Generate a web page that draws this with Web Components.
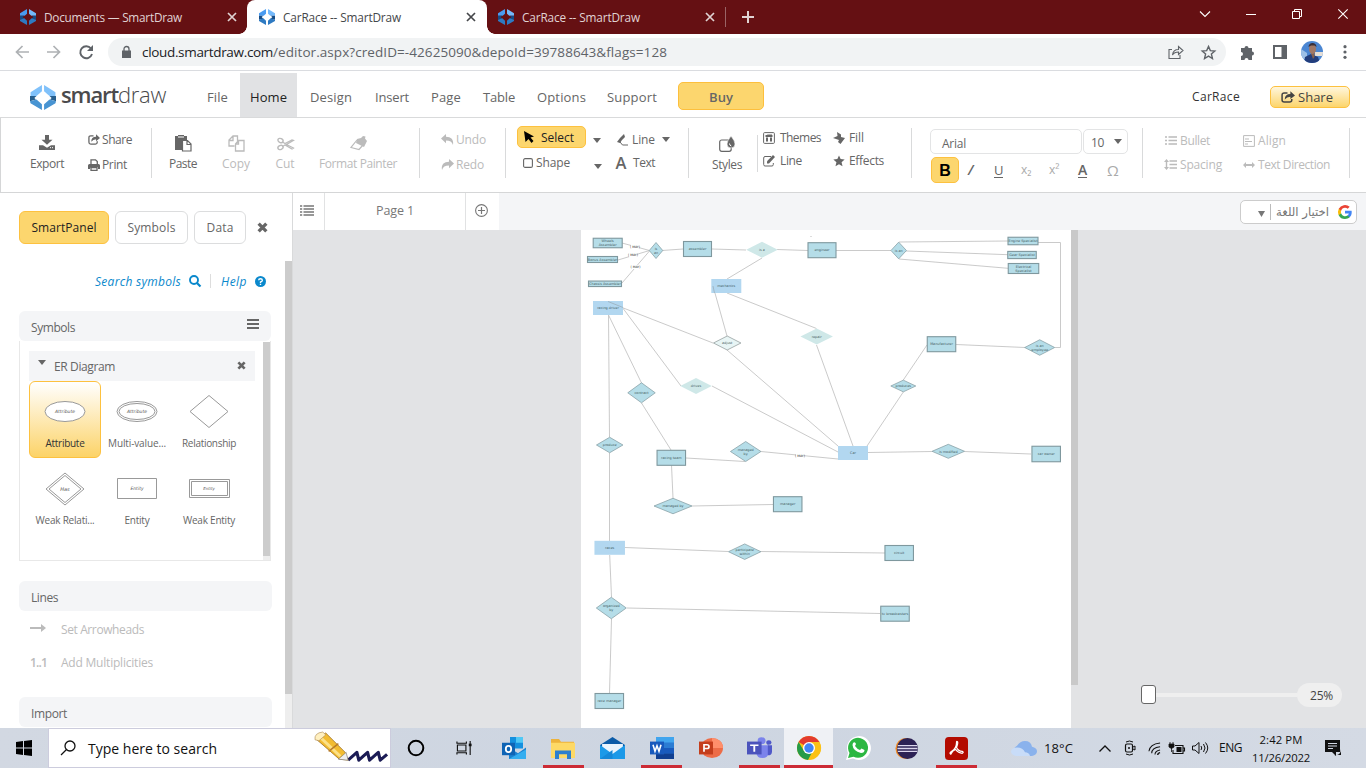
<!DOCTYPE html>
<html lang="en"><head><meta charset="utf-8"><title>CarRace -- SmartDraw</title>
<style>html,body{margin:0;height:100%;overflow:hidden}body{font-family:"Open Sans","Noto Sans",sans-serif;color:#666}</style></head>
<body><draw-window></draw-window>
<script>
const define=(name,css,html)=>customElements.define(name,class extends HTMLElement{
 constructor(){super();this.attachShadow({mode:'open'}).innerHTML='<style>:host{display:block;box-sizing:border-box}*{box-sizing:border-box}'+css+'</style>'+html}});

/* Text that tracks its letters to fill a given width */
customElements.define('ui-label',class extends HTMLElement{
 constructor(){super();this.attachShadow({mode:'open'}).innerHTML='<style>:host{display:block;white-space:nowrap;line-height:18px}span{display:inline-block}:host([u]) span{line-height:14px;border-bottom:1px solid currentColor}</style><span><slot></slot></span>'}
 connectedCallback(){const w=+this.getAttribute('w');if(!w)return;const s=this.shadowRoot.querySelector('span');
  this.style.width=w+'px';const n=this.textContent.length,r=s.getBoundingClientRect().width;
  if(r&&n>1)s.style.letterSpacing=((w-r)/n).toFixed(3)+'px'}
});
/* Grid row: the "at" attribute lists where each column starts */
customElements.define('ui-row',class extends HTMLElement{
 constructor(){super();this.attachShadow({mode:'open'}).innerHTML='<style>:host{display:grid;align-items:center;justify-items:start;box-sizing:border-box}</style><slot></slot>'}
 connectedCallback(){const a=this.getAttribute('at').split(' ').map(Number);this.style.paddingLeft=a[0]+'px';
  this.style.gridTemplateColumns=a.slice(1).map((v,i)=>(v-a[i])+'px').join(' ')+' minmax(0,1fr)'}
});
const S='fill="none" stroke="currentColor" ';
const doc=(c,x,l,inner)=>`<path d="M7 1h15v22H7z" fill="${x}"/><path d="M14 6h10v12H14z" fill="${l}"/><path d="M0 5l14-1v16L0 19z" fill="${c}"/>${inner}`;
const icons={
 gem:['0 0 24 24','<path d="M10.500 0v7L7 10H0V6.500z" fill="#4a9bf0"/><path d="M13.500 0v7l3.500 3h7V6.500z" fill="#74b9fb"/><path d="M0 10h6.500L4 12l2.500 2.500L0 16zM24 10h-6.500L20 12l-2.500 2.500L24 16z" fill="#154b85"/><path d="M0 16l6.500-2 4 3.500V24L0 18zM24 16l-6.500-2-4 3.500V24L24 18z" fill="#2e7ac2"/>'],
 logo:['0 0 24 24','<path d="M11 0v6l-5 4.500H.5V7z" fill="#80c1fa"/><path d="M13 0v6l5 4.500h5.500V7z" fill="#80c1fa"/><path d="M0 10.500h6L4 12.500l1.500 1.500L0 15.500zM24 10.500h-6l2 2-1.500 1.500 5.500 1.500z" fill="#275f8e"/><path d="M0 15.500L6 14l5 4.500V24L.5 17.500zM24 15.500L18 14l-5 4.500V24l10.500-6.500z" fill="#4894d2"/>'],
 x:['0 0 10 10',`<path d="M1 1l8 8M9 1L1 9" ${S}stroke-width="1.7"/>`],
 xt:['0 0 10 10',`<path d="M.3.3l9.4 9.4M9.7.3L.3 9.7" ${S}stroke-width="1.1"/>`],
 xb:['0 0 10 10',`<path d="M1.5 1.5l7 7M8.5 1.5l-7 7" ${S}stroke-width="3"/>`],
 plus:['0 0 12 12',`<path d="M6 0v12M0 6h12" ${S}stroke-width="2"/>`],
 chev:['0 0 10 6',`<path d="M0 .5l5 5 5-5" ${S}stroke-width="1.1"/>`],
 up:['0 0 12 7',`<path d="M.5 6.5L6 1l5.5 5.5" ${S}stroke-width="1.3"/>`],
 min:['0 0 10 10',`<path d="M0 5.5h10" ${S}/>`],
 rest:['0 0 10 10',`<path d="M.5 2.5h7v7h-7zM2.5 2.5v-2h7v7h-2" ${S}/>`],
 back:['0 0 14 14',`<path d="M14 7H1.5M7.5 1l-6 6 6 6" ${S}stroke-width="1.7"/>`],
 fwd:['0 0 14 14',`<path d="M0 7h12.500M6.5 1l6 6-6 6" ${S}stroke-width="1.700"/>`],
 reload:['0 0 14 14',`<path d="M12 3.500A6 6 0 1 0 13 9" ${S}stroke-width="1.900"/><path d="M14 0v6H8z" fill="currentColor"/>`],
 lock:['0 0 9 12',`<path d="M0 4.500h9V12H0z" fill="currentColor"/><path d="M2 5V3a2.500 2.500 0 0 1 5 0v2" ${S}stroke-width="1.300"/>`],
 pshare:['0 0 16 14',`<path d="M4 4.500H1v9h11V10M4.500 10c.5-4 3-5.500 6-5.500V1.500l4.500 4-4.500 4V7C8 7 6 7.500 4.500 10z" ${S}stroke-width="1.100"/>`],
 star:['0 0 14 14',`<path d="M7 1.300l1.700 3.900 4.200.4-3.200 2.800 1 4.200L7 10.400l-3.700 2.200 1-4.200L1.100 5.600l4.200-.4z" ${S}stroke-width="1.300"/>`],
 starf:['0 0 14 14','<path d="M7 .5l1.900 4.300 4.700.4L10 8.400l1.100 4.800L7 10.700l-4.100 2.500L4 8.400.4 5.200l4.700-.4z" fill="currentColor"/>'],
 puzzle:['0 0 15 15','<path d="M1 3h3.500a2 2 0 1 1 4 0H12v3.500a2 2 0 1 1 0 4V15H8.500a2 2 0 1 0-4 0H1v-4a2 2 0 1 0 0-4z" fill="currentColor"/>'],
 side:['0 0 14 14','<path d="M0 0h14v14H0zM2 2v10h6.500V2z" fill="currentColor" fill-rule="evenodd"/>'],
 dots:['0 0 4 14','<circle cx="2" cy="1.700" r="1.600" fill="currentColor"/><circle cx="2" cy="7" r="1.600" fill="currentColor"/><circle cx="2" cy="12.300" r="1.600" fill="currentColor"/>'],
 avatar:['0 0 22 22','<defs><clipPath id="c"><circle cx="11" cy="11" r="11"/></clipPath></defs><g clip-path="url(#c)"><path d="M0 0h22v22H0z" fill="#4b86d2"/><path d="M14 11h8v4h-8z" fill="#e5ded6"/><path d="M0 8l6 4v6H0z" fill="#9dc0e6"/><path d="M3 22l1-6 6-3 7 3 2 6z" fill="#233e7c"/><path d="M9.500 11h4v5l-1.500 2z" fill="#86614f"/><ellipse cx="11.500" cy="8" rx="3.500" ry="5" fill="#a07866"/><path d="M7.500 6c0-5.500 8-5.500 8 0l-2-1.500H10z" fill="#3a2f38"/></g>'],
 share:['0 0 13 12',`<path d="M6 2H3Q1 2 1 4v5q0 2 2 2h5q2 0 2-2V8" ${S}stroke-width="1.400"/><path d="M3.500 8.500Q3.500 3 8.700 3V.2L13 4.400 8.700 8V5.700Q5.500 5.700 3.500 8.500z" fill="currentColor"/>`],
 print:['0 0 12 12',`<path d="M3 6V.8h4.500L9.300 2.600V6M2.700 8H1.500M3 8.500h6v2.800H3z" ${S}stroke-width="1.300"/><path d="M0 6.500Q0 5 1.500 5h9Q12 5 12 6.500V10h-2V8H2v2H0z" fill="currentColor"/>`],
 export:['0 0 16 16','<path d="M6 0h4v5h3.500L8 10.500 2.500 5H6zM0 11h4l4 2.500L12 11h4v5H0z" fill="currentColor"/><path d="M11 13.500h1M13 13.500h1" stroke="#fff"/>'],
 paste:['0 0 17 17',`<path d="M0 1h3V0h6v1h3v4H7v10H0z" fill="currentColor"/><path d="M3 2h6" stroke="#ccc" stroke-width="1.500"/><path d="M7.500 5.500h5L16 9v7H7.500zM12 5.500V9.500h4" fill="#fff" stroke="currentColor" stroke-width="1.200"/>`],
 copy:['0 0 17 17',`<path d="M6.500 11H1V5l4-4h4.500v5M5 1v4.500H1M10.500 5.500H16V16H7.500V9zM10.500 5.500V9h-3" ${S}stroke-width="1.300"/>`],
 cut:['0 0 17 14',`<ellipse cx="3.500" cy="3.500" rx="2.700" ry="2" ${S}stroke-width="1.400" transform="rotate(25 3.500 3.500)"/><ellipse cx="3.500" cy="10.500" rx="2.700" ry="2" ${S}stroke-width="1.400" transform="rotate(-25 3.500 10.500)"/><path d="M5.500 5L8 6.500 15 3l1.500.5L9.500 7.500l7 3.500L15 12 8 8 5.500 9.500" ${S}stroke-width="1.200"/>`],
 paint:['0 0 17 14',`<path d="M7 3l4-1 2-2 2.500.5-.5 2L17 5l-3 6-8-4z" fill="currentColor"/><path d="M7 4L1 11.500l8 2L13 9" ${S}stroke-width="1.200"/>`],
 undo:['0 0 13 12','<path d="M5 0v3c5 0 8 3 7 9-1-3.500-3-5-7-5v3L0 5z" fill="currentColor"/>'],
 redo:['0 0 13 12','<path d="M8 0v3C3 3 0 6 1 12c1-3.500 3-5 7-5v3l5-5z" fill="currentColor"/>'],
 cursor:['0 0 10 12','<path d="M0 0l10 5.500-3.500 1L9.500 10 7.500 12 4.500 8 1.500 11z" fill="#000"/>'],
 caret:['0 0 8 5','<path d="M0 0h8L4 5z" fill="currentColor"/>'],
 square:['0 0 10 10',`<rect x=".6" y=".6" width="8.800" height="8.800" rx="1.500" ${S}stroke-width="1.100"/>`],
 pen:['0 0 12 12',`<path d="M7 0L3 4 0 8l3 1 2-3 3-3z" fill="currentColor"/><path d="M3 8l2.500 3H11" ${S}/>`],
 A:['0 0 12 12','<text x="6" y="12" text-anchor="middle" font-family="Open Sans" font-size="16.500" font-weight="600" fill="currentColor">A</text>'],
 styles:['0 0 17 16',`<rect x=".7" y="4" width="11.500" height="11.300" rx="2" ${S}stroke-width="1.200"/><path d="M12 0q4 5 4 8a4 4 0 0 1-8 0q0-3 4-8z" fill="currentColor" stroke="#fff" stroke-width=".6"/><path d="M10.500 7.500q0 2 1.800 2.500" stroke="#fff" fill="none"/>`],
 themes:['0 0 12 12',`<rect x=".6" y=".6" width="10.800" height="10.800" rx="1" ${S}/><path d="M3 2h3v2h3V2.500M3 5.500h2v4H3zM7 5.500h2v4H7z" fill="currentColor"/><path d="M2.500 4h7" ${S}stroke-width="2"/>`],
 edit:['0 0 12 12',`<path d="M8 1.500H2Q.7 1.500.7 3v6.500q0 1.500 1.300 1.500h7q1.300 0 1.300-1.500V8" ${S}/><path d="M10 0l2 2-6 6.500H4V6.300z" fill="currentColor"/>`],
 fill:['0 0 12 12','<path d="M4 0l4 2.500V5l4 1-4.500 6L5 10l1-2-6-2 4.500-2z" fill="currentColor"/>'],
 list:['0 0 14 11',`<path d="M0 1h2.200M0 4h2.200M0 7h2.200M0 10h2.200M3.500 1H14M3.500 4H14M3.500 7H14M3.500 10H14" ${S}stroke-width="1.600"/>`],
 bullet:['0 0 12 9',`<path d="M0 1h2M0 4.500h2M0 8h2M3.500 1H12M3.500 4.500H12M3.500 8H12" ${S}stroke-width="1.600"/>`],
 spacing:['0 0 12 9',`<path d="M4.500 1H12M4.500 4.500H12M4.500 8H12M1.500 1v7" ${S}stroke-width="1.400"/><path d="M1.500-1L4 2H-1zM1.500 10L4 7H-1z" fill="currentColor"/>`],
 align:['0 0 12 12',`<path d="M.6.6h10.800v10.800H.6zM2 4h4M2 6.500h7M2 9h3" ${S}/>`],
 dir:['0 0 12 6','<path d="M0 3l3-3v2h6V0l3 3-3 3V4H3v2z" fill="currentColor"/>'],
 arrow:['0 0 16 8','<path d="M0 3h11V0l5 4-5 4V5H0z" fill="currentColor"/>'],
 circplus:['0 0 13 13',`<circle cx="6.500" cy="6.500" r="5.900" ${S}stroke-width="1.100"/><path d="M6.500 3v7M3 6.500h7" ${S}stroke-width="1.200"/>`],
 search:['0 0 12 12',`<circle cx="5" cy="5" r="4" ${S}stroke-width="1.900"/><path d="M8 8l3.500 3.500" ${S}stroke-width="2.200"/>`],
 help:['0 0 12 12','<circle cx="6" cy="6" r="6" fill="currentColor"/><path d="M4 4.700Q4 3 6 3t2 1.600Q8 6 6 6.500v1M6 8.500v1.300" fill="none" stroke="#fff" stroke-width="1.500"/>'],
 burger:['0 0 12 10',`<path d="M0 1h12M0 5h12M0 9h12" ${S}stroke-width="1.900"/>`],
 google:['0 0 24 24','<path d="M23.500 12.300c0-.8-.1-1.600-.2-2.300H12v4.500h6.500a5.500 5.500 0 0 1-2.400 3.600v3h3.900c2.200-2.100 3.500-5.200 3.500-8.800z" fill="#4285f4"/><path d="M12 24c3.200 0 6-1.100 8-2.900l-3.900-3a7.200 7.200 0 0 1-10.800-3.800h-4v3.100A12 12 0 0 0 12 24z" fill="#34a853"/><path d="M5.300 14.300a7.200 7.200 0 0 1 0-4.600V6.600h-4a12 12 0 0 0 0 10.800z" fill="#fbbc05"/><path d="M12 4.800c1.800 0 3.300.6 4.600 1.800L20 3.200A12 12 0 0 0 1.300 6.600l4 3.100A7.200 7.200 0 0 1 12 4.800z" fill="#ea4335"/>'],
 win:['0 0 16 16','<path d="M0 2l7-1v6.500H0zM8 .9L16 0v7.500H8zM0 8.500h7V15l-7-1zM8 8.500h8V16l-8-1z" fill="#000"/>'],
 find:['0 0 16 16','<circle cx="10" cy="6" r="5" fill="none" stroke="#111" stroke-width="1.300"/><path d="M6.500 9.500L1 15" stroke="#111" stroke-width="1.300"/>'],
 doodle:['0 0 76 34','<path d="M34 29l9-8 2 8 9-8 2 8 9-8 2 8 7-6" fill="none" stroke="#1c1c55" stroke-width="3.200" stroke-linejoin="round"/><path d="M2 8L11 1l20 20 3 8-9-1z" fill="#f2bc31" stroke="#9a6b1c" stroke-width=".8"/><path d="M6 6l20 19" stroke="#fce188" stroke-width="3"/><path d="M24 28l8-7 2 8z" fill="#eee" stroke="#777" stroke-width=".6"/><path d="M0 8q-1-7 8-8l3 3-7 6z" fill="#fff0c0" stroke="#a78148" stroke-width=".6"/><path d="M14 20l10-8" stroke="#b77b29" stroke-width="1.500"/>'],
 cortana:['0 0 18 18','<circle cx="9" cy="9" r="7.300" fill="none" stroke="#000" stroke-width="2"/>'],
 taskview:['0 0 18 16','<path d="M1.500 4.500h9v7h-9zM1 .5v2h10v-2M1 15.500v-2h10v2M15 0v16" fill="none" stroke="#111" stroke-width="1.200"/><path d="M13.500 3h3v3h-3z" fill="#111"/>'],
 outlook:['0 0 24 24','<path d="M8 0h13v12H8z" fill="#1490df"/><path d="M14 0h7v6h-7z" fill="#50c8f5"/><path d="M7 11l9 6 8-6v12H7z" fill="#1a83d2"/><path d="M7 23l17-10v10z" fill="#35aef0"/><path d="M0 6h13v13H0z" fill="#0f64b5"/><ellipse cx="6.500" cy="12.500" rx="2.700" ry="3.300" fill="none" stroke="#fff" stroke-width="1.800"/>'],
 files:['0 0 24 22','<path d="M0 1h8l2 3h13v17H0z" fill="#edb33c"/><path d="M0 5h24v16H0z" fill="#fdd966"/><path d="M4 13h16v9h-4v-5H8v5H4z" fill="#2d7fce"/>'],
 mail:['0 0 24 22','<path d="M0 8L12 0l12 8v14H0z" fill="#0c5ca8"/><path d="M2 7h20v6l-10 5L2 13z" fill="#e9f4fd"/><path d="M0 8l12 9 12-9v14H0z" fill="#1b99e8"/><path d="M0 22L12 13v9z" fill="#1588d8"/>'],
 word:['0 0 24 24','<path d="M6 0h18v24H6z" fill="#2b7cd3"/><path d="M6 0h18v6H6z" fill="#41a5ee"/><path d="M6 12h18v6H6z" fill="#185abd"/><path d="M6 18h18v6H6z" fill="#103f91"/><path d="M0 5h14v14H0z" fill="#185abd"/><path d="M3 8.500l2 7 2-6 2 6 2-7" fill="none" stroke="#fff" stroke-width="1.600"/>'],
 ppt:['0 0 24 24','<circle cx="13" cy="12" r="11" fill="#ed6c47"/><path d="M13 1a11 11 0 0 1 11 11H13z" fill="#ff8f6b"/><path d="M0 5h14v14H0z" fill="#c43e1c"/><path d="M5 16V8.500h3q2 0 2 2t-2 2H5" fill="none" stroke="#fff" stroke-width="1.700"/>'],
 teams:['0 0 24 24','<circle cx="14" cy="4" r="3.800" fill="#7b83eb"/><circle cx="21" cy="6" r="2.500" fill="#5059c9"/><path d="M9 9h12v8q-1 6-6 6-6 0-6-7z" fill="#7b83eb"/><path d="M20 9h4v7q0 4-4 4z" fill="#5059c9"/><path d="M0 5h14v14H0z" fill="#4b53bc"/><path d="M3 9h8M7 9v7" stroke="#fff" stroke-width="1.800"/>'],
 chrome:['0 0 24 24','<circle cx="12" cy="12" r="12" fill="#fbc116"/><path d="M12 12L1.600 6A12 12 0 0 1 22.400 6z" fill="#e33b2e"/><path d="M1.600 6A12 12 0 0 0 11 24l5-9.500L7 15z" fill="#269b48"/><path d="M12 6h10.400a12 12 0 0 1 0 12z" fill="#fbc116"/><circle cx="12" cy="12" r="6" fill="#fff"/><circle cx="12" cy="12" r="4.700" fill="#4285f4"/>'],
 whatsapp:['0 0 24 24','<path d="M0 24l2-7A12 12 0 1 1 7 22.500z" fill="#fff"/><path d="M2 22l1.500-5A10 10 0 1 1 7.500 20.700z" fill="#2cb742"/><path d="M7 7q2-2 3 1l-1 2q2 3 5 4l1.500-1.500 3 1.500q0 3-3.500 3Q7 15 6.500 9z" fill="#fff"/>'],
 eclipse:['0 0 24 24','<circle cx="11.500" cy="12" r="11" fill="#f08a24"/><circle cx="13" cy="12" r="11" fill="#2c2255"/><path d="M3 9h20M2.500 12h21M3 15h20" stroke="#dcd7ee" stroke-width="1.500"/>'],
 acrobat:['0 0 24 24','<rect width="24" height="24" rx="4" fill="#b30b00"/><path d="M6 18q-2-1 1-3 5-3 5-9 0-2 1-1 1 1-1 6 2 4 6 4 2 1 0 2-4 0-7-4-3 1-5 5z" fill="none" stroke="#fff" stroke-width="1.300"/>'],
 cloud:['0 0 26 16','<path d="M7 16a6 6 0 0 1-1-11Q9 0 14 0q6 0 7 6 5 1 5 5t-5 5z" fill="#8ab2ec"/><path d="M5 16q-5-1-5-5 1-4 6-4 6 0 8 5 4 0 5 4z" fill="#c8dcf8"/>'],
 cam:['0 0 11 16','<rect x="1.500" y="4" width="7" height="8" rx="1.500" fill="none" stroke="#111" stroke-width="1.200"/><path d="M2 2q3.500-2 7 0M2 14q3.500 2 7 0M9 7l2-1v4l-2-1" fill="none" stroke="#111"/><circle cx="5" cy="8" r="1" fill="#111"/>'],
 wifi:['0 0 14 14','<path d="M1 10Q2 2 13 1M4 12Q4 6 13 5M7.500 13.500q0-4 5.500-5" fill="none" stroke="#111" stroke-width="1.100"/><path d="M10.500 14q0-2 2.500-2.500" fill="none" stroke="#111" stroke-width="1.500"/>'],
 battery:['0 0 16 13','<path d="M6 3.500h8v8H4V8M14 6h1.500v3H14" fill="none" stroke="#111" stroke-width="1.100"/><path d="M7.500 5h5v5h-5z" fill="#111"/><path d="M1 0v2M4 0v2M0 2h5v3L2.500 6.500 0 5zM2.500 6v4" stroke="#111" stroke-width=".8" fill="#111"/>'],
 sound:['0 0 17 14','<path d="M.5 5h2.500l4-3.500v11L3 9H.5z" fill="none" stroke="#111"/><path d="M9 5q1.500 2 0 4M11.500 3q3 4 0 8M13.500 1.500q4.500 5.500 0 11" fill="none" stroke="#111"/>'],
 notif:['0 0 16 16','<path d="M0 0h15v12h-4v4l-4-4H0z" fill="#111"/><path d="M3 3.500h9M3 6h9M3 8.500h5" stroke="#d0d6e2"/><path d="M9 15q7 1 7-6v6z" fill="#111"/>']
};
customElements.define('ui-icon',class extends HTMLElement{
 constructor(){super();const [v,p]=icons[this.getAttribute('n')],[w,h]=this.getAttribute('s').split(' ');
 this.attachShadow({mode:'open'}).innerHTML=`<style>:host{display:block;width:${w}px;height:${h||w}px}svg{display:block;overflow:visible}</style><svg width="${w}" height="${h||w}" viewBox="${v}" preserveAspectRatio="none">${p}</svg>`}
});
const I=(n,s,st='')=>`<ui-icon n="${n}" s="${s}"${st?` style="${st}"`:''}></ui-icon>`;
const L=(t,w,st='')=>`<ui-label w="${w}"${st?` style="${st}"`:''}>${t}</ui-label>`;

define('browser-tabs',`:host{background:#651013;height:34px;color:#e0d3d3;font-size:11.8px}ui-row{height:34px}ui-label{margin-top:-1px}
.on{height:34px;width:240px;background:#fff;border-radius:8px 8px 0 0;color:#45474a;display:grid;position:relative}
.on:before,.on:after{content:"";position:absolute;bottom:0;width:8px;height:8px;left:-8px;background:radial-gradient(circle at 0 0,transparent 7.500px,#fff 8px)}.on:after{left:240px;background:radial-gradient(circle at 100% 0,transparent 7.500px,#fff 8px)}
i{width:1px;height:20px;background:#9a6466}`,
`<ui-row at="20 44 227 247 498 522 705 725 742 1200 1246 1292 1338">${I('gem',16)+L('Documents — SmartDraw',138)+I('x',10)}<div class="on"><ui-row at="12 36 219">${I('gem',16)+L('CarRace -- SmartDraw',118)+I('x',10)}</ui-row></div>${I('gem',16)+L('CarRace -- SmartDraw',118)+I('x',10)}<i></i>${I('plus',12)+I('chev','10 6','margin-top:-6px;color:#fff')+I('min',10,'margin-top:-6px;color:#fff')+I('rest',10,'margin-top:-6px;color:#fff')+I('xt',10,'margin-top:-6px;color:#fff')}</ui-row>`);

define('browser-bar',`:host{height:37px;background:#fff;border-bottom:1px solid #dadce0;color:#5f6368;padding-top:4px}ui-row{height:28px}.url{width:1118px;height:28px;border-radius:14px;background:#f1f3f4;font-size:13.500px}`,
`<ui-row at="15 47 79 108 1240 1273 1301 1343">${I('back',14,'color:#aeb1b4')+I('fwd',14,'color:#aeb1b4')+I('reload',14)}<div class="url"><ui-row at="14 34 165 1060 1093">${I('lock','9 12')+L('cloud.smartdraw.com',131,'color:#202124')+L('/editor.aspx?credID=-42625090&amp;depoId=39788643&amp;flags=128',394)+I('pshare','16 14')+I('star',15)}</ui-row></div>${I('puzzle',15)+I('side',14)+I('avatar',22)+I('dots','4 14')}</ui-row>`);

define('app-menu',`:host{height:47px;border-bottom:1px solid #d9dadb;background:#fff;font-size:13px}ui-row{height:46px}
.word{display:flex;font-size:22px;color:#4a4a4c;margin-top:-4px}.home{width:57px;height:44px;margin-top:2px;background:#e1e2e4;color:#222;display:flex;align-items:center;justify-content:center}
.buy{width:86px;height:28px;border:1px solid #fdbf3c;border-radius:5px;background:#fcd66e;display:flex;justify-content:center;align-items:center;font-weight:600;margin-top:4px}
.sh{width:80px;height:22px;border:1px solid #fdc13f;border-radius:5px;background:linear-gradient(#fff6dc,#fcd56c);margin-top:6px;color:#444}ui-label{margin-top:6px}.word ui-label,.buy ui-label,.sh ui-label{margin:0}.home ui-label{margin-top:3px}`,
`<ui-row at="30 61 207 240 310 375 431 483 537 607 678 1192 1270">${I('logo','26 25','margin-top:6px')}<div class="word">${L('smart',57,'font-weight:600;line-height:30px;margin-top:4px')+L('draw',48,'font-weight:300;line-height:30px;margin-top:4px')}</div>${L('File',21)}<div class="home">${L('Home',37)}</div>${L('Design',42)+L('Insert',34)+L('Page',30)+L('Table',32)+L('Options',49)+L('Support',50)}<div class="buy">${L('Buy',24,'margin-top:2px')}</div>${L('CarRace',48,'color:#333;font-size:12px')}<div class="sh"><ui-row at="10 27" style="height:20px">${I('share','14 12')+L('Share',35)}</ui-row></div></ui-row>`);

define('app-ribbon',`:host{height:75px;border-bottom:1px solid #d5d6d7;border-left:1px solid #d5d6d7;background:#fff;font-size:12px}
ui-row{align-items:start}.c{display:flex;flex-direction:column;align-items:center}.off{color:#bbb}i{width:1px;height:50px;margin-top:10px;background:#d9dadb}
.sel{width:69px;height:22px;border:1px solid #fdc13f;border-radius:5px;background:#fcd66e;color:#222}.r{align-items:center;height:23px}
.box{height:25px;border:1px solid #e3e4e5;border-radius:5px}.box ui-row{height:25px;align-items:center}
.b{width:28px;height:26px;border:1px solid #fdc13f;border-radius:5px;background:#fcd66e;color:#000;font:bold 16px/25px "Liberation Sans",Arial,sans-serif;text-align:center}`,
`<ui-row at="29 86 150 168 221 274.500 318 418 440 504 516 614 687 711 756 762 832 910 929 1141 1164 1242 1348">
<div class="c" style="padding-top:17px;gap:5px">${I('export','16 15')+L('Export',34)}</div>
<div style="padding-top:10px"><ui-row class="r" at="1 15">${I('share','12 11')+L('Share',30)}</ui-row><ui-row class="r" at="1 15" style="margin-top:2px">${I('print','12 12')+L('Print',25)}</ui-row></div><i></i>
<div class="c" style="padding-top:17px;gap:3px">${I('paste',17)+L('Paste',28)}</div><div class="c off" style="padding-top:17px;gap:3px">${I('copy',17)+L('Copy',28)}</div><div class="c off" style="padding-top:19px;gap:4px">${I('cut','17 14')+L('Cut',19)}</div><div class="c off" style="padding-top:18px;gap:5px">${I('paint','17 14')+L('Format Painter',78)}</div><i></i>
<div class="off" style="padding-top:10px"><ui-row class="r" at="0 15">${I('undo','13 11')+L('Undo',30)}</ui-row><ui-row class="r" at="0 15" style="margin-top:2px">${I('redo','13 11')+L('Redo',28)}</ui-row></div><i></i>
<div style="padding-top:8px"><ui-row at="0 76" style="align-items:center"><div class="sel"><ui-row at="6 23" style="height:20px;align-items:center">${I('cursor','10 12')+L('Select',33,'padding-top:1px')}</ui-row></div>${I('caret','8 5','margin-top:6px')}</ui-row><ui-row class="r" at="6 19 77" style="margin-top:3px">${I('square',10)+L('Shape',34)+I('caret','8 5','margin-top:7px')}</ui-row></div>
<div style="padding-top:10px"><ui-row class="r" at="2 17 47">${I('pen',12)+L('Line',23)+I('caret','8 5')}</ui-row><ui-row class="r" at="0 18">${I('A',12)+L('Text',22)}</ui-row></div><i></i>
<div class="c" style="padding-top:18px;gap:4px">${I('styles','17 16')+L('Styles',30)}</div><i style="height:37px;margin-top:17px"></i>
<div style="padding-top:8px"><ui-row class="r" at="0 17">${I('themes',12)+L('Themes',41)}</ui-row><ui-row class="r" at="0 17">${I('edit',12)+L('Line',22)}</ui-row></div>
<div style="padding-top:8px"><ui-row class="r" at="0 16">${I('fill',12)+L('Fill',15)}</ui-row><ui-row class="r" at="0 16">${I('starf',12)+L('Effects',35)}</ui-row></div><i></i>
<div style="padding-top:11px"><ui-row at="0 153"><div class="box" style="width:152px"><ui-row at="11">${L('Arial',24,'padding-top:2px')}</ui-row></div><div class="box" style="width:45px"><ui-row at="7 30">${L('10',13)+I('caret','8 5','margin-top:-2px')}</ui-row></div></ui-row>
<ui-row at="1 38 64 91 119 148 177" style="align-items:center;margin-top:3px"><div class="b">B</div><ui-label style="font-size:14px;font-weight:600;font-style:italic">/</ui-label><ui-label u style="font-size:13px">U</ui-label><ui-label style="font-size:12px;color:#aaa">x₂</ui-label><ui-label style="font-size:12px;color:#aaa">x²</ui-label><ui-label u style="font-size:14px;font-weight:600">A</ui-label><ui-label style="font-size:15px;color:#aaa">Ω</ui-label></ui-row></div><i></i>
<div class="off" style="padding-top:11px"><ui-row class="r" at="0 15">${I('bullet','12 9')+L('Bullet',30)}</ui-row><ui-row class="r" at="0 15" style="margin-top:1px">${I('spacing','12 9')+L('Spacing',42)}</ui-row></div>
<div class="off" style="padding-top:11px"><ui-row class="r" at="0 15">${I('align',12)+L('Align',28)}</ui-row><ui-row class="r" at="0 15" style="margin-top:1px">${I('dir','12 6')+L('Text Direction',72)}</ui-row></div><i></i></ui-row>`);

const line='fill="#fff" stroke="#999" stroke-width="1"';
const tt=(x,t,s=4.500)=>`<text x="36" y="${x}" font-size="${s}" text-anchor="middle" fill="#555" font-style="italic">${t}</text>`;
const shapes={
 attr:`<ellipse cx="36" cy="30.500" rx="20" ry="10" ${line}/>`+tt(32,'Attribute'),
 multi:`<ellipse cx="36" cy="30.500" rx="20" ry="10" ${line}/><ellipse cx="36" cy="30.500" rx="18" ry="8" ${line}/>`+tt(32,'Attribute'),
 rel:`<path d="M36 14.500L55 30.500 36 46.500 17 30.500z" ${line}/>`,
 weak:`<path d="M36 15L55 31 36 47 17 31z" ${line}/><path d="M36 17.500L52 31 36 44.500 20 31z" ${line}/>`+tt(33,'Has',5),
 ent:`<path d="M16.500 20.500h39v20h-39z" ${line}/>`+tt(32,'Entity'),
 went:`<path d="M16.500 21.500h40v18h-40z" ${line}/><path d="M18.500 23.500h36v14h-36z" ${line}/>`+tt(32,'Entity',4)};
customElements.define('symbol-tile',class extends HTMLElement{constructor(){super();
 this.attachShadow({mode:'open'}).innerHTML=`<style>:host{display:flex;flex-direction:column;align-items:center;box-sizing:border-box;width:72px;height:77px;border:1px solid transparent;border-radius:6px;font-size:10px}:host([on]){border-color:#fdc13f;background:linear-gradient(#fff,#fcd368);color:#333}svg{width:72px;height:52px;flex:none}</style><svg viewBox="0 1 72 52" font-family="DejaVu Sans">${shapes[this.getAttribute('shape')]}</svg><slot></slot>`}});
const tile=(s,t,w,on='')=>`<symbol-tile shape="${s}" ${on}>${L(t,w)}</symbol-tile>`;

define('smart-panel',`:host{width:293px;height:535px;border-right:1px solid #d9dadb;display:flex;background:#fff;font-size:12px;overflow:hidden}.main{width:285px}
.t{height:33px;border:1px solid #dcddde;border-radius:6px;display:flex;align-items:center;justify-content:center}.t.on{background:#fcd66e;border-color:#fdc13f;color:#222}
.find{color:#0a88cc;font-style:italic;height:20px;margin-top:27px}.find i{height:14px;width:1px;background:#ddd}
.h{margin-left:19px;width:253px;height:30px;border-radius:6px;background:#f4f5f7}.h ui-row,.er ui-row{height:30px}
.box{margin-left:19px;width:252px;height:220px;border:1px solid #e8e8e8;border-top:0;display:flex;justify-content:space-between}
.er{background:#f4f5f7;width:226px;height:30px;margin:10px 0 0 9px}.tiles{display:grid;grid-template-columns:72px 72px 72px;margin-left:9px}
.sb{width:7px;background:#eee}.sb i{display:block;background:#ccc}.off{color:#bbb}`,
`<div class="main"><ui-row at="19 115 194 256.500" style="padding-top:18px"><div class="t on" style="width:90px">${L('SmartPanel',65)}</div><div class="t" style="width:73px">${L('Symbols',48)}</div><div class="t" style="width:52px">${L('Data',27)}</div>${I('xb',11)}</ui-row>
<ui-row class="find" at="95 189 210 221 254.500">${L('Search symbols',86,'margin-top:1px')+I('search',12)}<i></i>${L('Help',26,'margin-top:1px')+I('help',11)}</ui-row>
<div class="h" style="margin-top:20px;width:252px"><ui-row at="12 228">${L('Symbols',44,'margin-top:4px')+I('burger','12 10','margin-top:-4px')}</ui-row></div>
<div class="box"><div><div class="er"><ui-row at="9 25 207.500">${I('caret','8 5','margin-top:-7px')+L('ER Diagram',61,'margin-top:2px')+I('xb',9,'margin-top:-2px')}</ui-row></div>
<div class="tiles">${tile('attr','Attribute',39,'on')+tile('multi','Multi-value...',58)+tile('rel','Relationship',54)+tile('weak','Weak Relati...',59)+tile('ent','Entity',25)+tile('went','Weak Entity',52)}</div></div><div class="sb" style="margin-top:1px"><i style="height:214px"></i></div></div>
<div class="h" style="margin-top:20px"><ui-row at="12">${L('Lines',27,'margin-top:4px')}</ui-row></div>
<ui-row class="off" at="30 61" style="height:33px;margin-top:2px">${I('arrow','16 8','margin-top:-4px')+L('Set Arrowheads',83)}</ui-row>
<ui-row class="off" at="30 61" style="height:33px">${L('1..1',17,'font-weight:600')+L('Add Multiplicities',92)}</ui-row>
<div class="h" style="margin-top:18px"><ui-row at="12">${L('Import',36,'margin-top:4px')}</ui-row></div></div>
<div class="sb" style="margin-top:68px"><i style="height:433px"></i></div>`);

/* Entity-relationship diagram: kind, centre x, centre y, width, height, text lines */
const nodes=[['r',607.700,243,29,9.500,'Wheels|Assembler'],['r',602.500,259.500,30,6,'Bonus Assembler'],['r',605,283.800,33,5.500,'Chassis Assembler'],['r',697.500,249,28,15,'assembler'],['r',822,250.200,28,15,'engineer'],['b',726.300,286,30,14,'mechanics'],['b',608,308,30,14,'racing driver'],['r',671.300,457.800,28.500,15,'racing team'],
['d',656,250.500,13.500,16,'is|an'],['t',762,249.700,31.500,16,'is a'],['l',727.200,343,27.500,14,'adjust'],['t',816.700,336.600,32.500,16,'repair'],['t',696,386,31.500,16,'drives'],['d',641.500,392.800,27.500,20,'contract'],['d',609.700,445,26.500,15.500,'produce'],['d',745.700,451.500,30.500,20,'managed|by'],['d',898.700,250.500,15.500,16.700,'is an'],
['r',1023,241,30,7.500,'Engine Specialist'],['r',1022,255,28.500,7.200,'Gear Specialist'],['r',1023.500,268.500,30.500,10,'Electrical|Specialist'],['r',941.500,344.200,28.500,15,'Manufacturer'],['d',1039.700,347.500,30,15.500,'is an|employee'],['d',903.300,386,25,11.700,'produces'],['b',853,453,30,14,'Car'],['d',948.300,451.300,32.500,14,'is modified'],['r',1046.200,454,28.500,15.500,'car owner'],
['d',673,506,38,15.500,'managed by'],['r',787.700,504.200,28.500,15,'manager'],['b',609.700,547.800,30.500,14,'races'],['d',744.700,551.700,32.500,15.500,'participate|within'],['r',899.200,553,28.500,15,'circuit'],['d',611.300,608,30,21.500,'organized|by'],['r',895,613.700,28.500,15,'tv broadcasters'],['r',609.300,701,28.500,15,'race manager']];
const wires='M622 243L649.500 250.500L618 260M622 283L649.500 251M662 250.500L683 249M712 249L746 250M777 249.500L808 250.500M762 258L727 279M713 286L727 336M727 293L816.500 328.500M816.500 345L853 446M608 302L713 343M622 307L681 386M608 314L641.500 383M608.500 314L609.500 437M641.500 403L671 450M609.500 453V541M686 458L745 461.500M761 451.500L838 459M712 386L838 452M727 350L838 446M671.500 465L673 498M692 506L773 504.500M625 547.500L728 551.500M761 551.500L885 553M609.700 555L611.500 597M627 608L880 613.500M611.500 619L609.500 693M836 250.500H891M899 242L1008 241M906 251L1008 254.700M899 259L1008 268.300M1038 242.500H1060.500V347.500H1055M956 344.500L1025 347.500M927 345L903.300 380M903.300 392L867 446M868 452.500L932 451.500M964.500 451.500L1031 454';
const look={r:'fill="#b5dde8" stroke="#7f989e" stroke-width="1.100"',b:'fill="#b2d7f0"',d:'fill="#b5dde8" stroke="#7f989e" stroke-width=".7"',t:'fill="#cfe8e8"',l:'fill="#e8f5f5" stroke="#8a9494" stroke-width=".7"'};
const node=([k,x,y,w,h,t])=>{const ls=t.split('|'),a=w/2,b=h/2;
 const s='rb'.includes(k)?`<rect x="${x-a}" y="${y-b}" width="${w}" height="${h}" ${look[k]}/>`:`<path d="M${x} ${y-b}L${x+a} ${y} ${x} ${y+b} ${x-a} ${y}z" ${look[k]}/>`;
 return s+ls.map((l,i)=>`<text x="${x}" y="${y+1.200+(i-(ls.length-1)/2)*4}">${l}</text>`).join('')};
define('er-canvas',`:host{height:498px;background:#e2e3e5}.stage{display:grid;grid-template-columns:288px 490px 7px 1fr;height:498px}.page{background:#fff}svg{display:block}text{font:3.400px "DejaVu Sans",sans-serif;text-anchor:middle;fill:#435a60}
.bar{background:#c9c9c9;height:455px}.zoom{display:flex;align-items:center;align-self:end;margin:0 0 21px 63px;height:24px}.thumb{width:15px;height:19px;border:1px solid #666;border-radius:3px;background:#fff;margin-top:-2px}.track{width:141px;height:4px;background:#efefef}.pct{width:45px;height:24px;border-radius:12px;background:#efefef;padding:4px 13px;font-size:12px;color:#444}`,
`<div class="stage"><div></div><div class="page"><svg width="490" height="498" viewBox="581 230 490 498"><path d="${wires}" fill="none" stroke="#c4c4c4" stroke-width=".9"/><path d="M608 302L622 307M713 286L715 292" stroke="#999" stroke-width=".6"/>${nodes.map(node).join('')}<path d="M608 301.500L623 307.500M713 286L714.500 293" stroke="#9aa9b3" stroke-width=".7"/>${[[635,248],[633,256],[635.500,268],[800,457]].map(([x,y])=>`<path d="M${x-4} ${y-3}h8v4h-8z" fill="#fff"/><text x="${x}" y="${y}" style="font-size:3.200px;fill:#222">( MAY)</text>`).join('')}<path d="M810.500 236.500h1" stroke="#bbb"/></svg></div><div class="bar"></div><div class="zoom"><div class="thumb"></div><div class="track"></div><div class="pct">${L('25%',23)}</div></div></div>`);

define('page-strip',`:host{height:37px;background:#f4f5f7;font-size:12.500px;color:#777;display:flex;justify-content:space-between}.w{background:#fff;width:206px;height:37px}.w ui-row{height:37px}i{width:1px;height:37px;background:#e1e2e3}
.lang{width:117px;height:24px;border:1px solid #ccc;border-radius:5px;background:#fff;margin:7px 9px 0 0;font:12.500px "DejaVu Sans","Noto Sans",sans-serif}.lang ui-row{height:22px}.lang i{height:16px;background:#bbb}`,
`<div class="w"><ui-row at="7 31 83 172 182">${I('list','14 11','margin-top:-2px')}<i></i>${L('Page 1',38,'margin-top:-2px')}<i></i>${I('circplus',13,'margin-top:-2px')}</ui-row></div><div class="lang"><ui-row at="17 29 35 97">${I('caret','7 6','margin-top:3px')}<i></i><ui-label dir="rtl" style="font-size:11.700px">اختيار اللغة</ui-label>${I('google',14)}</ui-row></div>`);

define('task-bar',`:host{height:40px;background:linear-gradient(100deg,#d2d8e2,#cdd5e1 50%,#d4dae4);color:#111;font-size:13px}ui-row{height:40px}
.s{width:343px;height:40px;background:#fff;border:1px solid #ccd}.s ui-row{height:38px}.apps{display:grid;grid-template-columns:repeat(12,49.100px);height:40px}.apps div{display:grid;place-items:center;position:relative}
.apps .on{background:#eff1f5}.run:after{content:"";position:absolute;left:4px;right:4px;bottom:0;height:3px;background:#cc2b35}.on.run:after{left:0;right:0}.clock{font-size:11.300px;display:flex;flex-direction:column;align-items:center;height:37px;justify-content:space-between}`,
`<ui-row at="16 48 391.500 1011 1044 1099 1124 1148 1169 1192 1219 1252 1325">${I('win',16)}<div class="s"><ui-row at="11 39 266">${I('find',16)+L('Type here to search',129,'font-size:14px;padding-top:1px')+I('doodle','74 33')}</ui-row></div>
<div class="apps"><div>${I('cortana',18)}</div><div>${I('taskview','17 14','margin-left:-2px')}</div>${[['outlook','24 23'],['files','24 21',1],['mail','25 22'],['word','24 22',1],['ppt','24 22'],['teams','25 22',1],['chrome',24,2],['whatsapp',24],['eclipse',23],['acrobat',23,1]].map(([n,s,r])=>`<div class="${r?'run':''} ${r==2?'on':''}">${I(n,s)}</div>`).join('')}</div>
${I('cloud','26 15')+L('18°C',29)+I('up','12 7')+I('cam','11 16')+I('wifi','13 13')+I('battery','16 13')+I('sound','17 14')+L('ENG',23,'font-size:12px')}<div class="clock">${L('2:42 PM',43,'padding-top:1px')+L('11/26/2022',58)}</div>${I('notif',16)}</ui-row>`);

define('draw-window',`:host{width:1366px;height:768px;background:#fff;overflow:hidden}main{display:grid;grid-template-columns:293px 1073px;height:535px}`,
`<browser-tabs></browser-tabs><browser-bar></browser-bar><app-menu></app-menu><app-ribbon></app-ribbon><main><smart-panel></smart-panel><section><page-strip></page-strip><er-canvas></er-canvas></section></main><task-bar></task-bar>`);
</script></body></html>
